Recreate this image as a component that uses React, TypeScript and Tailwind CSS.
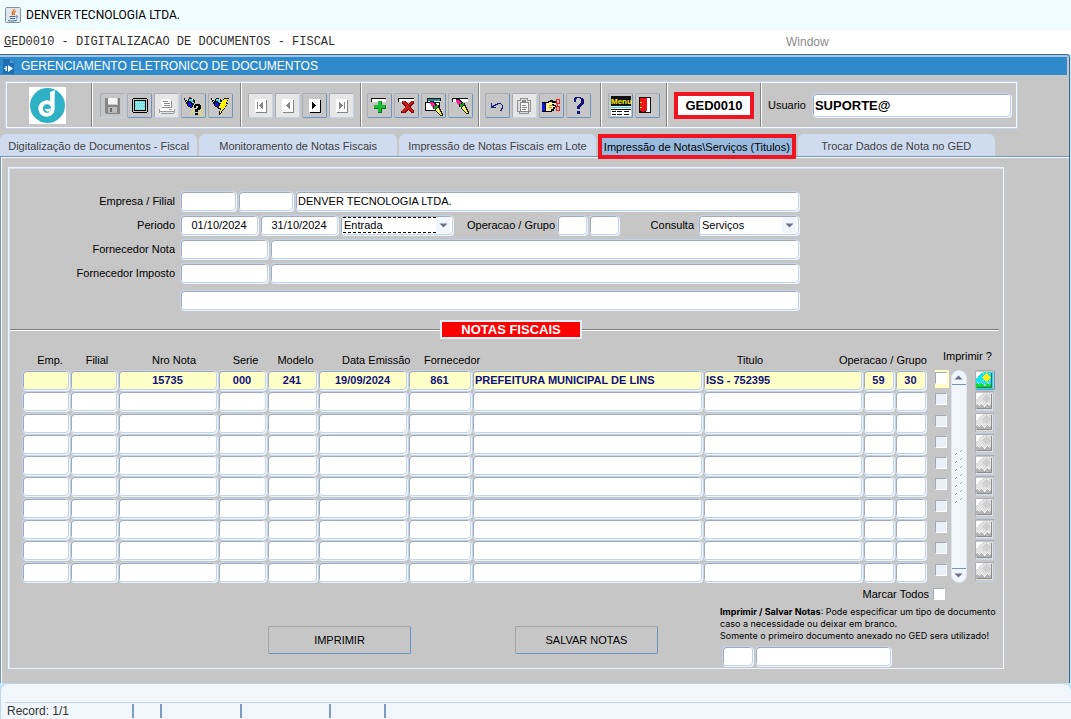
import type { InputHTMLAttributes, ReactNode } from 'react';
import clsx from 'clsx';

const fieldStyle =
  'rounded-sm border border-[#c3d4ea] bg-white text-[11px] leading-4 text-black shadow-[inset_1px_1px_0_#a3a9b5,1px_1px_0_#eef4fb] outline-none';

function Field({ className, ...props }: InputHTMLAttributes<HTMLInputElement>) {
  return <input type="text" className={clsx(fieldStyle, 'h-5 min-w-0 px-0.5', className)} {...props} />;
}

function Arrow({ up }: { up?: boolean }) {
  return (
    <svg width="9" height="5" viewBox="0 0 9 5" className={clsx('shrink-0', up && 'rotate-180')} aria-hidden="true">
      <path d="M0.5 0.5h8l-4 4z" fill="#6b6f8d" />
    </svg>
  );
}

type PickerProps = { id: string; label: string; options: string[]; focused?: boolean; className?: string };

function Picker({ id, label, options, focused, className }: PickerProps) {
  return (
    <span className={clsx(fieldStyle, 'flex h-5 items-center p-0.5', className)}>
      <select
        id={id}
        aria-label={label}
        className={clsx(
          'h-4 min-w-0 flex-1 appearance-none border-y border-dashed bg-white px-px leading-3 outline-none',
          focused ? 'border-black' : 'border-transparent',
        )}
      >
        {options.map((option) => (
          <option key={option}>{option}</option>
        ))}
      </select>
      <span className="flex h-4 w-3.5 items-center justify-center bg-[#f0f6fc]">
        <Arrow />
      </span>
    </span>
  );
}

type ToolProps = { label: string; disabled?: boolean; pale?: boolean; children: ReactNode };

function Tool({ label, disabled, pale, children }: ToolProps) {
  return (
    <button
      type="button"
      title={label}
      aria-label={label}
      disabled={disabled}
      className={clsx(
        'flex h-[25px] w-[25px] items-center justify-center rounded-xs border border-t-[#a9adb5] border-l-[#a9adb5]',
        disabled ? 'border-r-[#c3d4ea] border-b-[#c3d4ea]' : 'border-r-[#6f93bd] border-b-[#6f93bd]',
        pale && 'bg-[#e6e6e6]',
      )}
    >
      <svg width="23" height="23" viewBox="1 1 23 23" shapeRendering="crispEdges" aria-hidden="true">
        {children}
      </svg>
    </button>
  );
}

function NavGlyph({ color, flip, bar }: { color: string; flip?: boolean; bar?: boolean }) {
  return (
    <>
      <path d="M7 6h11v13H7z" fill="#fff" />
      <path d="M18 7h1v13H8v-1h10z" fill={color} />
      <g transform={flip ? 'translate(25 0) scale(-1 1)' : undefined}>
        <path d="M14 9h1v7h-1v-1h-1v-1h-1v-1h-1v-1h1v-1h1v-1h1z" fill={color} />
        {bar && <path d="M9 9h1v7h-1z" fill={color} />}
      </g>
    </>
  );
}

function Torch() {
  return (
    <>
      <path d="M3 5h1v1h1v1h1v1h1V6h1V5h3v1h2v1h1v3h-1v2h-1v2h-1v1H9v-1H7v-1H6v-2H5V9H4V7H3z" fill="#111" />
      <path d="M8 6h3v1h1v2h1v1h-2V9h-1V8H8z" fill="#35e4f5" />
      <path d="M7 9h2v1h1v1h1v3H9v-1H7z" fill="#1414d8" />
      <path d="M4 6h1v1H4zM5 8h1v1H5zM11 6h1v1h-1zM12 9h1v1h-1z" fill="#fff" />
    </>
  );
}

function Brush() {
  return (
    <>
      <path d="M8 6h4v1h1v1h1v1h1v1h2v2h1v2h1v2h1v2h1v3h-3v-1h-1v-1h-1v-1h-1v-1h-1v-1h-1v-2h-2v-2h-1v-1H9V9H8z" fill="#202020" />
      <path d="M8 7h3v1h1v1h1v2h-2v1h-1v-1H9V9H8z" fill="#ff1fb0" />
      <path d="M9 8h1v1H9zM11 10h1v1h-1z" fill="#e02020" />
      <path d="M12 11h2v-1h2v2h-1v1h-1v1h-2z" fill="#16a016" />
      <path d="M14 14h1v-1h2v2h1v2h1v2h1v1h-2v-1h-1v-1h-1v-1h-1v-1h-1z" fill="#f2ef3a" />
      <path d="M15 14h1v1h1v2h-1v-1h-1z" fill="#fffcae" />
    </>
  );
}

function Separator() {
  return <div className="w-0.5 self-stretch border-l border-l-[#808080] bg-white" />;
}

function Toolbar() {
  return (
    <div className="mr-[51px] ml-[5px] flex h-12 items-center border border-[#c3d4ea] p-px shadow-[inset_0_0_0_1px_#f4f8fd]">
      <div className="flex w-[84px] justify-center pr-1">
        <svg width="37" height="37" viewBox="0 0 37 37" role="img" aria-label="Denver">
          <path d="M0 0h37v37H0z" fill="#fff" />
          <circle cx="18.5" cy="18.5" r="17.5" fill="#2fb1c5" />
          <path
            d="M21 5l5-2c-.7 6-.3 12-.3 18.500a8.200 8.200 0 1 1-9-8.100c2-.2 3.400.2 4.500.9z"
            fill="#fff"
          />
          <circle cx="18" cy="21.500" r="4.200" fill="#2fb1c5" />
          <path d="M15.500 21.500c3 1.500 5 .5 6.500-1l-1 4.500-3 1z" fill="#fff" />
          <path d="M15 20.500a4 4 0 0 0 6 3.500c-1.500 3-6 2-6-1z" fill="#2fb1c5" />
        </svg>
      </div>
      <Separator />
      <div className="flex gap-0.5 px-[7px]">
        <Tool label="Salvar" disabled>
          <path d="M5 5h15v16H6v-1H5z" fill="#858585" />
          <path d="M8 5h9v7H8z" fill="#f4f4f4" />
          <path d="M8 14h9v6H8z" fill="#b9b9b9" />
          <path d="M10 15h2v4h-2zM17 6h2v1h-2z" fill="#6c6c6c" />
          <path d="M8 12h10V5h-1v6H8z" fill="#c9c9c9" />
        </Tool>
        <Tool label="Tela">
          <path d="M6 5h14v1h1v13h-1v1H6v-1H5V6h1z" fill="#000" />
          <path d="M6 6h14v13H6z" fill="#c6c6c6" />
          <path d="M7 7h12v11H7z" fill="#000" />
          <path d="M8 8h10v9H8z" fill="#62e6ee" />
          <path
            d="M9 9h1v1H9zM11 9h1v1h-1zM13 9h1v1h-1zM15 9h1v1h-1zM10 11h1v1h-1zM12 11h1v1h-1zM14 11h1v1h-1zM16 11h1v1h-1zM9 13h1v1H9zM11 13h1v1h-1zM13 13h1v1h-1zM15 13h1v1h-1zM10 15h1v1h-1zM12 15h1v1h-1zM14 15h1v1h-1zM16 15h1v1h-1z"
            fill="#fff"
          />
        </Tool>
        <Tool label="Imprimir tela" disabled pale>
          <path d="M7 6h9v1h1v1h1v6H8v-3H7z" fill="#fff" />
          <path d="M9 8h5v1H9zM10 10h6v1h-6zM10 12h6v1h-6zM17 8h1v6h-1zM8 14h10v1H8z" fill="#8b8b8b" />
          <path d="M6 15h14v4H6z" fill="#fff" />
          <path d="M5 16h1v4H5zM20 16h1v4h-1zM6 18h14v1H6zM7 20h13v1H7zM15 16h3v1h-3z" fill="#9a9a9a" />
        </Tool>
        <Tool label="Entrar consulta">
          <path
            d="M18 11h1v1h-1zM20 11h1v1h-1zM19 13h1v1h-1zM21 13h1v1h-1zM20 15h1v1h-1zM19 17h1v1h-1zM21 17h1v1h-1zM18 19h1v1h-1zM20 19h1v1h-1zM19 21h1v1h-1zM21 21h1v1h-1zM11 18h1v1h-1zM12 16h1v1h-1zM12 20h1v1h-1zM10 20h1v1h-1zM17 21h1v1h-1z"
            fill="#fff200"
          />
          <Torch />
          <path d="M8 4h2v1H8z" fill="#e81212" />
          <path
            d="M13 12h1v-1h5v1h1v4h-1v1h-2v2h-3v-3h2v-1h1v-2h-2v2h-2zM14 20h3v2h-3z"
            fill="#000"
          />
        </Tool>
        <Tool label="Executar consulta">
          <Torch />
          <path d="M16 5h5v1h-1v2h-1v2h1v1h-1v2h-1v1h-1v2h-1v1h-1v1h-1v2h-1v1h-1v1h-1v-4h1v-2h-2v-1h1v-2h1v-1h1v-3h1V8h1V6h1z" fill="#111" />
          <path d="M16 6h4v1h-1v2h-1v2h1v1h-1v1h-1v2h-1v1h-1v1h-1v1h-1v2h-1v-3h1v-2h-2v-2h1v-2h1v-2h1V8h1z" fill="#fff600" />
        </Tool>
      </div>
      <Separator />
      <div className="flex gap-0.5 px-[6px]">
        <Tool label="Primeiro registro" disabled pale>
          <NavGlyph color="#858585" bar />
        </Tool>
        <Tool label="Registro anterior" disabled pale>
          <NavGlyph color="#858585" />
        </Tool>
        <Tool label="Proximo registro">
          <NavGlyph color="#000" flip />
        </Tool>
        <Tool label="Ultimo registro" disabled pale>
          <NavGlyph color="#858585" flip bar />
        </Tool>
      </div>
      <Separator />
      <div className="flex gap-0.5 px-[5px]">
        <Tool label="Inserir registro">
          <path d="M4 5h15v4H4z" fill="#111" />
          <path d="M5 6h14v3H5z" fill="#fff" />
          <path d="M11 8h4v4h4v4h-4v4h-4v-4H7v-4h4z" fill="#08781b" />
          <path d="M11 8h3v4h4v3h-4v4h-3v-4H7v-3h4z" fill="#18bd34" />
        </Tool>
        <Tool label="Excluir registro">
          <path d="M4 5h16v4H4z" fill="#111" />
          <path d="M5 6h15v3H5z" fill="#fff" />
          <path d="M8 8h3l3 3 3-3h3v2l-4 4 4 4v2h-3l-3-3-3 3H7v-2l4-4-3-3z" fill="#7b0909" />
          <path d="M8 8h2l4 4 4-4h1v1l-4 5 4 4v1h-2l-3-4-4 4H8v-1l4-5-4-4z" fill="#d01919" />
        </Tool>
        <Tool label="Limpar bloco">
          <path d="M6 5h14v3h-1v10H4V9h2z" fill="#111" />
          <path d="M7 6h12v2H7z" fill="#1794a0" />
          <path d="M7 8h12v1H7zM5 10h13v2H5zM5 12h11v5H5z" fill="#fff" />
          <g transform="translate(1 2)">
            <Brush />
          </g>
        </Tool>
        <Tool label="Limpar registro">
          <path d="M4 5h16v4H4z" fill="#111" />
          <path d="M5 6h15v3H5z" fill="#fff" />
          <Brush />
        </Tool>
      </div>
      <Separator />
      <div className="flex gap-0.5 pr-[9px] pl-[5px]">
        <Tool label="Desfazer">
          <path
            d="M6 10h1v3h1v-1h2v-1h2v-1h4v1h1v1h1v4h-1v2h-2v-1h1v-2h1v-3h-1v-1h-3v1h-2v1H9v1h2v1H6z"
            fill="#17207e"
          />
        </Tool>
        <Tool label="Colar" disabled pale>
          <path d="M5 7h3V5h8v2h3v12h-2v2H7v-2H5z" fill="#929292" />
          <path d="M6 8h3V6h6v2h3v10h-2v2H8v-2H6z" fill="#dedede" />
          <path d="M8 9h8v9H8z" fill="#fff" stroke="#888" />
          <path d="M10 7h4v3h-4zM10 12h4v1h-4zM10 14h5v1h-5zM10 16h4v1h-4z" fill="#888" />
        </Tool>
        <Tool label="Recortar">
          <path d="M3 9h5v10H3z" fill="#000" />
          <path d="M3 10h3v8H3z" fill="#1515e2" />
          <path d="M7 9h2V8h2V7h3v1h4v3h-3v1h2v2h-1v2h-1v2h-2v1H8z" fill="#000" />
          <path d="M7 10h3V9h3v1h4v1h-4v2h3v1h-2v2h-2v2H7z" fill="#fff0a4" />
          <path d="M10 12h4v1h-4zM10 14h3v1h-3z" fill="#bd961c" />
          <path
            d="M17 6h4v5h-2v2h2v5h-4v-5h1v-2h-1zM18 7v3h2V7zM18 14v3h2v-3z"
            fill="#f01818"
            fillRule="evenodd"
          />
        </Tool>
        <Tool label="Ajuda">
          <path
            d="M8 5h1V4h6v1h2v1h1v5h-1v1h-1v1h-1v1h-1v2h-3v-3h1v-1h1v-1h1v-1h1V6h-1V5h-3v1h-1v3H8zM11 18h3v3h-3z"
            fill="#12127b"
          />
        </Tool>
      </div>
      <Separator />
      <div className="flex gap-0.5 px-[6px]">
        <Tool label="Menu">
          <path d="M3 3h20v10H3z" fill="#111" />
          <text x="3" y="11" fontFamily="Liberation Sans, sans-serif" fontSize="8" fontWeight="700" fill="#fff200">
            Menu
          </text>
          <path d="M3 13h20v10H3z" fill="#fff" />
          <path d="M3 14h20v1H3z" fill="#21d7df" />
          <path d="M3 16h20v1H3zM4 18h4v1H4zM9 18h5v1H9zM16 18h5v1h-5zM4 21h4v1H4zM9 21h5v1H9zM16 21h5v1h-5z" fill="#111" />
        </Tool>
        <Tool label="Sair">
          <path d="M4 4h12v16H4z" fill="#111" />
          <path d="M11 5h4v14h-4z" fill="#fff" />
          <path d="M5 5h7v13H9v1H7v-1H5z" fill="#ef1313" />
          <path d="M5 9h2v1H5zM5 14h2v1H5z" fill="#fff200" />
        </Tool>
      </div>
      <Separator />
      <div className="flex w-[92px] justify-center">
        <output className="border-4 border-[#f01420] bg-white px-[7px] text-[13px] leading-[19px] font-bold">GED0010</output>
      </div>
      <Separator />
      <label htmlFor="usuario" className="pr-[6px] pl-[6px]">
        Usuario
      </label>
      <input
        id="usuario"
        defaultValue="SUPORTE@"
        className={clsx(fieldStyle, 'mr-[5px] h-6 min-w-0 flex-1 px-0.5 !text-[13px] font-bold')}
      />
    </div>
  );
}

const tabs = [
  'Digitalização de Documentos - Fiscal',
  'Monitoramento de Notas Fiscais',
  'Impressão de Notas Fiscais em Lote',
  'Impressão de Notas\\Serviços (Titulos)',
  'Trocar Dados de Nota no GED',
];

function Tabs() {
  return (
    <div role="tablist" className="relative z-10 mr-[74px] grid grid-cols-5 items-start gap-0.5">
      {tabs.map((tab, index) => (
        <button
          key={tab}
          type="button"
          role="tab"
          aria-selected={index === 3}
          className={clsx(
            'whitespace-nowrap',
            index === 3
              ? 'h-[25px] border-4 border-[#f01420] bg-[#98bbdf] text-black'
              : 'h-[22px] rounded-t-md bg-[#cfdcf0] pt-0.5 text-[#404040]',
          )}
        >
          {tab}
        </button>
      ))}
    </div>
  );
}

const labelStyle = 'w-[169px] shrink-0 pr-[3px] text-right';

function Filters() {
  return (
    <div className="mr-[204px] flex flex-col gap-1 pt-[23px]">
      <div className="flex items-center gap-0.5">
        <label htmlFor="empresa" className={labelStyle}>
          Empresa / Filial
        </label>
        <Field id="empresa" className="w-14" />
        <Field aria-label="Filial" className="w-[55px]" />
        <Field aria-label="Nome da empresa" className="flex-1" defaultValue="DENVER TECNOLOGIA LTDA." />
      </div>
      <div className="flex items-center gap-0.5">
        <label htmlFor="periodo" className={labelStyle}>
          Periodo
        </label>
        <Field id="periodo" className="w-[78px] text-center" defaultValue="01/10/2024" />
        <Field aria-label="Data final" className="w-[78px] text-center" defaultValue="31/10/2024" />
        <Picker id="tipo" label="Tipo" options={['Entrada', 'Saida']} focused className="w-[113px]" />
        <label htmlFor="operacao" className="ml-3">
          Operacao / Grupo
        </label>
        <Field id="operacao" className="w-[30px]" />
        <Field aria-label="Grupo" className="w-[30px]" />
        <label htmlFor="consulta" className="ml-auto pr-0.5">
          Consulta
        </label>
        <Picker id="consulta" label="Consulta" options={['Serviços', 'Notas']} className="w-[101px]" />
      </div>
      <div className="flex items-center gap-0.5">
        <label htmlFor="fornecedor-nota" className={labelStyle}>
          Fornecedor Nota
        </label>
        <Field id="fornecedor-nota" className="w-[88px]" />
        <Field aria-label="Nome do fornecedor da nota" className="flex-1" />
      </div>
      <div className="flex items-center gap-0.5">
        <label htmlFor="fornecedor-imposto" className={labelStyle}>
          Fornecedor Imposto
        </label>
        <Field id="fornecedor-imposto" className="w-[88px]" />
        <Field aria-label="Nome do fornecedor do imposto" className="flex-1" />
      </div>
      <Field aria-label="Observacao" className="mt-[3px] ml-[171px]" />
    </div>
  );
}

const columns = [
  { name: 'Empresa', value: '', align: 'text-center' },
  { name: 'Filial', value: '', align: 'text-center' },
  { name: 'Nro Nota', value: '15735', align: 'text-center' },
  { name: 'Serie', value: '000', align: 'text-center' },
  { name: 'Modelo', value: '241', align: 'text-center' },
  { name: 'Data Emissão', value: '19/09/2024', align: 'text-center' },
  { name: 'Fornecedor', value: '861', align: 'text-center' },
  { name: 'Nome do fornecedor', value: 'PREFEITURA MUNICIPAL DE LINS', align: 'text-left' },
  { name: 'Titulo', value: 'ISS - 752395', align: 'text-left' },
  { name: 'Operacao', value: '59', align: 'text-center' },
  { name: 'Grupo', value: '30', align: 'text-center' },
];

function Picture({ active }: { active: boolean }) {
  return (
    <svg width="17" height="17" viewBox="0 0 17 17" shapeRendering="crispEdges" aria-hidden="true">
      <path d="M0 0h17v17H0z" fill={active ? '#12e4f2' : '#e2e2e2'} />
      <path d="M0 0h7v1H5v1H4v1H3v1H2v2H0z" fill="#fff" />
      <path
        d="M8 3h5v5H8zM7 1h1v1H7zM10 0h1v2h-1zM13 1h1v1h-1zM6 5h1v1H6zM14 5h1v1h-1zM10 9h1v1h-1zM7 8h1v1H7zM13 8h1v1h-1zM9 2h3v7H9zM7 4h7v3H7z"
        fill={active ? '#ffef12' : '#cfcfcf'}
      />
      <path
        d="M0 12h1v-1h1v1h1v1h1v-1h1v-1h1v1h1v1h1v1h1v-1h1v-1h1v-1h1v1h1v1h1v-1h1v4H0z"
        fill={active ? '#10e01c' : '#b4b4b4'}
      />
      <path d="M1 10h1v1h1v1H2v-1H1zM5 10h1v1h1v1H6v-1H5zM8 13h1v-1h1v1H9v1H8zM11 10h1v1h1v1h-1v-1h-1z" fill="#fff" />
      <path d="M15 1h1v15H1v-1h14z" fill={active ? '#267078' : '#8c8c8c'} />
    </svg>
  );
}

function ScrollBar() {
  return (
    <div className="flex h-full w-4 flex-col items-center rounded-full border border-[#dce6f2] bg-[#f0f6fc]">
      <button type="button" aria-label="Rolar para cima" className="flex h-3.5 w-full items-center justify-center border-b border-[#6f93bd]">
        <Arrow up />
      </button>
      <svg width="10" height="55" viewBox="0 0 10 55" className="my-auto" aria-hidden="true">
        {[0, 8, 16, 24, 32, 40, 48].map((y) => (
          <path key={y} d={`M1 ${y + 6}l2-2M6 ${y + 3}l2-2`} stroke="#8ba8cc" />
        ))}
      </svg>
      <button type="button" aria-label="Rolar para baixo" className="flex h-3.5 w-full items-center justify-center border-t border-[#6f93bd]">
        <Arrow />
      </button>
    </div>
  );
}

const checkboxStyle =
  'block h-3 w-3 appearance-none border border-t-[#a3a9b5] border-l-[#a3a9b5] border-r-white border-b-white checked:bg-[#17207e]';

function Notes() {
  return (
    <table className="h-[231px] w-full table-fixed border-collapse">
      <colgroup>
        <col className="w-[48px]" />
        <col className="w-[48px]" />
        <col className="w-[100px]" />
        <col className="w-[49px]" />
        <col className="w-[51px]" />
        <col className="w-[90px]" />
        <col className="w-[64px]" />
        <col />
        <col className="w-[160px]" />
        <col className="w-[32px]" />
        <col className="w-[32px]" />
        <col className="w-[24px]" />
        <col className="w-[24px]" />
        <col className="w-[20px]" />
      </colgroup>
      <thead>
        <tr className="h-[18px] text-center align-top whitespace-nowrap [&>th]:font-normal">
          <th className="pl-2">Emp.</th>
          <th className="pl-1.5">Filial</th>
          <th className="pl-3">Nro Nota</th>
          <th className="pl-1.5">Serie</th>
          <th className="pl-1.5">Modelo</th>
          <th className="pl-6">Data Emissão</th>
          <th colSpan={2} className="pl-4 text-left">
            Fornecedor
          </th>
          <th className="pr-[66px]">Titulo</th>
          <th colSpan={2}>
            <div className="flex justify-end">Operacao / Grupo</div>
          </th>
          <th colSpan={3} className="pl-4 text-left">
            <div className="-mt-1">Imprimir ?</div>
          </th>
        </tr>
      </thead>
      <tbody>
        {Array.from({ length: 10 }, (_, row) => (
          <tr key={row} className="h-[21px]">
            {columns.map((column) => (
              <td key={column.name} className="p-0 pr-px align-top">
                <input
                  type="text"
                  aria-label={`${column.name} ${row + 1}`}
                  defaultValue={row === 0 ? column.value : ''}
                  className={clsx(
                    fieldStyle,
                    'block h-5 w-full px-0.5 font-bold !text-[#10107b]',
                    column.align,
                    row === 0 && '!bg-[#ffffc8]',
                  )}
                />
              </td>
            ))}
            <td className="p-0 pl-[8px] align-top">
              <div className={clsx('h-[18px] w-3.5 pt-0.5', row === 0 && 'bg-[#ffffc8]')}>
                <input
                  type="checkbox"
                  aria-label={`Imprimir nota ${row + 1}`}
                  disabled={row > 0}
                  className={clsx(checkboxStyle, row === 0 ? 'bg-white' : 'bg-[#eaf0f7]')}
                />
              </div>
            </td>
            {row === 0 && (
              <td rowSpan={10} className="h-px p-0">
                <ScrollBar />
              </td>
            )}
            <td className="p-0 align-top">
              <button
                type="button"
                aria-label={`Ver documento ${row + 1}`}
                disabled={row > 0}
                className={clsx(
                  'flex h-5 w-5 items-center justify-center rounded-xs border border-t-[#a9adb5] border-l-[#a9adb5]',
                  row === 0 ? 'border-r-[#6f93bd] border-b-[#6f93bd]' : 'border-r-[#c3d4ea] border-b-[#c3d4ea]',
                )}
              >
                <Picture active={row === 0} />
              </button>
            </td>
          </tr>
        ))}
      </tbody>
    </table>
  );
}

const actionStyle =
  'h-7 w-[143px] rounded-xs border border-t-[#a5a5a5] border-l-[#a5a5a5] border-r-[#6f93bd] border-b-[#6f93bd]';

function Actions() {
  return (
    <div className="flex justify-between pr-1">
      <div className="flex gap-[104px] pt-10 pl-[259px]">
        <button type="button" className={actionStyle}>
          IMPRIMIR
        </button>
        <button type="button" className={actionStyle}>
          SALVAR NOTAS
        </button>
      </div>
      <div className="w-[279px]">
        <div className="mb-1 flex items-center gap-1 pr-[54px]">
          <label htmlFor="todos" className="ml-auto">
            Marcar Todos
          </label>
          <input id="todos" type="checkbox" className={clsx(checkboxStyle, 'bg-white')} />
        </div>
        <p className="font-[Inter,'Liberation_Sans',sans-serif] text-[9px] leading-3 whitespace-nowrap">
          <b>Imprimir / Salvar Notas</b>: Pode especificar um tipo de documento
          <br />
          caso a necessidade ou deixar em branco.
          <br />
          Somente o primeiro documento anexado no GED sera utilizado!
        </p>
        <div className="mt-1 flex gap-0.5 pl-0.5">
          <Field aria-label="Tipo de documento" className="w-[31px]" />
          <Field aria-label="Descricao do tipo" className="w-[136px]" />
        </div>
      </div>
    </div>
  );
}

export default function App() {
  return (
    <div className="flex min-h-screen flex-col bg-[#b8f0ff] font-['Liberation_Sans',Arial,sans-serif] text-[11px] leading-4 text-black">
      <header className="flex h-[30px] items-center gap-[5px] bg-[#f0fdff] pl-[5px]">
        <svg width="16" height="16" viewBox="0 0 16 16" aria-hidden="true">
          <rect x="0.500" y="0.500" width="15" height="15" rx="1" fill="#dfe7ef" stroke="#8293a7" />
          <path d="M9 2c1 2-4 3-1 6M11 4c-2 1-3 2-1.500 4" fill="none" stroke="#e66f18" strokeWidth="1.300" />
          <path d="M4.500 9.500h6M5 11.500h5M3 13.500c3 1 7 .6 9-.5M11 9c2-.5 2 1.500 0 2" fill="none" stroke="#466d9b" />
        </svg>
        <h1 className="font-[Roboto,'Open_Sans',sans-serif] text-[12px]">DENVER TECNOLOGIA LTDA.</h1>
      </header>
      <nav className="flex h-6 items-center bg-white pl-1 text-[12px]">
        <a href="#ged0010" className="w-[782px] font-['Liberation_Mono',monospace] text-[#303030]">
          <u>G</u>ED0010 - DIGITALIZACAO DE DOCUMENTOS - FISCAL
        </a>
        <a href="#window" className="text-[#8c8c8c]">
          Window
        </a>
      </nav>

      <main className="mr-px flex flex-1 flex-col rounded-tr-sm border-t border-r border-t-[#44638f] border-r-[#44638f] bg-[#c6c6c6]">
        <div className="mr-0.5 flex h-5 items-center gap-[6px] border-t-2 border-[#a4c8e6] bg-[#2f8acb]">
          <svg width="15" height="17" viewBox="0 0 15 17" aria-hidden="true">
            <path d="M3 1h7l4 4v11H3z" fill="#1f70b2" />
            <path d="M10 1v4h4z" fill="#4b9bd3" />
            <path d="M8 7v7l5-3.500zM7 8v5H5.500V8zM4 10h2v1H4z" fill="#f1f9ff" />
          </svg>
          <h2 className="text-[12px] text-white">GERENCIAMENTO ELETRONICO DE DOCUMENTOS</h2>
        </div>
        <div className="pt-1.5 pb-[5px]">
          <Toolbar />
        </div>
        <Tabs />
        <div className="-mt-[3px] flex-1 border-t border-l border-[#6f93bd] shadow-[inset_1px_1px_0_#fff]">
          <section className="mt-[10px] mr-[65px] mb-[14px] ml-[7px] border border-[#eef4fb] pb-[2px] shadow-[inset_1px_1px_0_#d4e0f1]">
            <Filters />
            <div className="mt-[10px] mr-1 ml-px flex items-center">
              <div className="h-0.5 w-[430px] border-t border-t-[#808080] bg-white" />
              <h3 className="w-[142px] border-2 border-[#e6eef8] bg-[#ff0000] text-center text-[13px] leading-[15px] font-bold text-white">
                NOTAS FISCAIS
              </h3>
              <div className="h-0.5 flex-1 border-t border-t-[#808080] bg-white" />
            </div>
            <div className="pt-[13px] pr-2 pb-[3px] pl-[13px]">
              <Notes />
            </div>
            <Actions />
          </section>
        </div>
      </main>

      <footer className="rounded-t-lg border-t border-l border-[#c3d4ea] bg-[#f0f6fc] pt-[18px] text-[12px] text-[#333]">
        <div className="ml-1 flex h-[17px] items-center border-t border-[#c3d4ea]">
          <span className="w-[127px] pl-0.5">Record: 1/1</span>
          <span className="h-3.5 w-7 border-l-2 border-[#7c9cc2]" />
          <span className="h-3.5 w-20 border-l-2 border-[#7c9cc2]" />
          <span className="h-3.5 w-[89px] border-l-2 border-[#7c9cc2]" />
          <span className="h-3.5 w-[55px] border-l-2 border-[#7c9cc2]" />
          <span className="h-3.5 border-l-2 border-[#7c9cc2]" />
        </div>
      </footer>
    </div>
  );
}
